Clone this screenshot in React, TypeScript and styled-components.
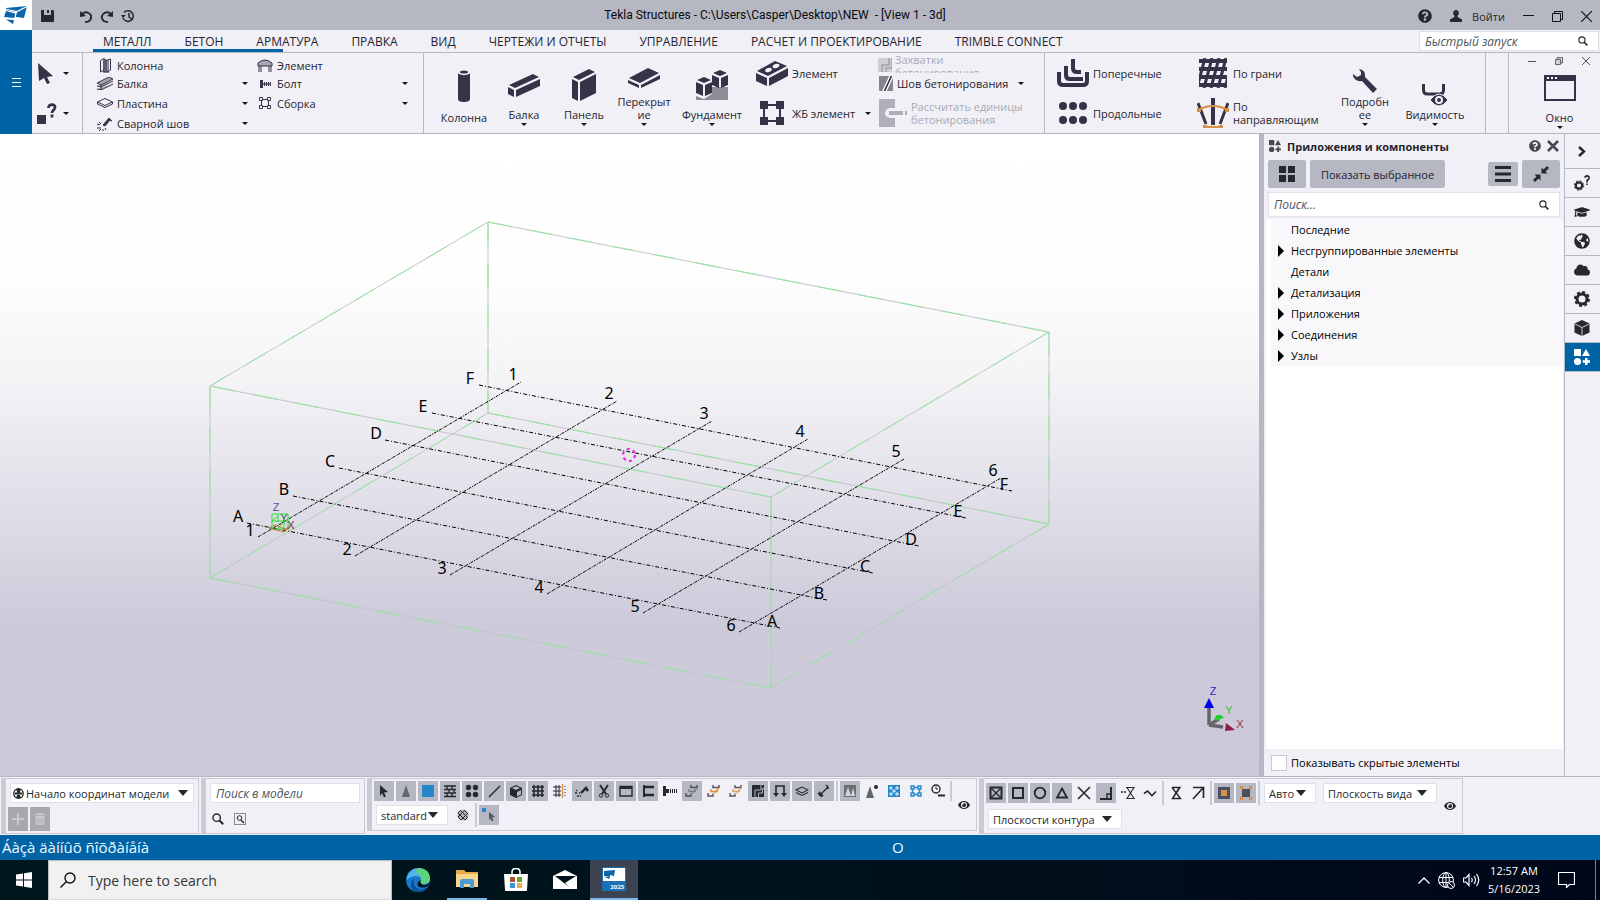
import React from "react";
import styled, { createGlobalStyle, css } from "styled-components";
import {
  FaCloud,
  FaEye,
  FaGlobeAmericas,
  FaGraduationCap,
  FaQuestionCircle,
  FaTrashAlt,
} from "react-icons/fa";

const INK = "#353347";
const DARK = "#25282c";
const PANEL = "#f1f0f6";
const BAR = "#b5b7c3";
const LINE = "#b5b7c3";
const SOFT = "#c9cad4";
const BLUE = "#0063a6";
const ORANGE = "#d68f45";

const GlobalStyle = createGlobalStyle`
  * { box-sizing: border-box; }
  body {
    margin: 0;
    font-family: "Open Sans", "Noto Sans", sans-serif;
    font-size: 11px;
    color: #25242f;
    background: ${PANEL};
  }
  button, input, select {
    font: inherit;
    color: inherit;
    margin: 0;
    padding: 0;
    border: 0;
    background: none;
    border-radius: 0;
  }
  svg { display: block; flex: none; }
  ul { list-style: none; margin: 0; padding: 0; }
`;

/* ---------- frame ---------- */

const Page = styled.div`
  display: flex;
  flex-direction: column;
  min-height: 100vh;
`;

const TitleBar = styled.header`
  display: grid;
  grid-template-columns: 1fr auto 1fr;
  align-items: center;
  height: 30px;
  background: ${BAR};
`;

const TitleSide = styled.div<{ $end?: boolean }>`
  display: flex;
  align-items: center;
  height: 30px;
  gap: ${(p) => (p.$end ? 18 : 8)}px;
  > button { padding-top: 2px; }
  ${(p) => p.$end && css`
    justify-content: flex-end;
    padding-right: 8px;
  `}
`;

const Logo = styled.span`
  width: 32px;
  height: 30px;
  padding: 5px 4px;
  background: #fff;
`;

const TitleText = styled.h1`
  margin: 0 0 0 -50px;
  font: 400 12px/30px Roboto, "Open Sans", sans-serif;
  color: #08080c;
  white-space: pre;
`;

const IconButton = styled.button`
  display: inline-flex;
  align-items: center;
  gap: 10px;
  color: ${DARK};
`;

const SaveButton = styled(IconButton)`
  margin: 0 18px 0 1px;
`;

const HeaderBody = styled.div`
  display: flex;
`;

const MenuButton = styled.button`
  display: grid;
  place-items: center;
  width: 32px;
  background: ${BLUE};
  color: #fff;
`;

const HeaderMain = styled.div`
  flex: 1;
  min-width: 0;
`;

const TabRow = styled.nav`
  position: relative;
  display: flex;
  align-items: center;
  gap: 33px;
  height: 23px;
  padding: 0 1px 0 71px;
  border-bottom: 1px solid ${LINE};
`;

const Tab = styled.button`
  padding-top: 2px;
  font-size: 12px;
  line-height: 20px;
  white-space: nowrap;
`;

const TabMarker = styled.span`
  position: absolute;
  left: 61px;
  bottom: 0;
  width: 190px;
  height: 3px;
  background: ${BLUE};
`;

const SearchBox = styled.label<{ $width?: number }>`
  display: flex;
  align-items: center;
  width: ${(p) => (p.$width ? `${p.$width}px` : "auto")};
  height: 20px;
  padding: 0 10px 0 5px;
  background: #fff;
  border: 1px solid #e0e0e8;

  input {
    flex: 1;
    min-width: 0;
    height: 16px;
    font-size: 12px;
    outline: 0;
  }
  input::placeholder {
    color: #4d5560;
    font-style: italic;
    opacity: 1;
  }
`;

const QuickLaunch = styled(SearchBox)`
  margin-left: auto;
`;

/* ---------- ribbon ---------- */

const Ribbon = styled.div`
  display: flex;
  height: 81px;
  border-bottom: 1px solid ${LINE};
`;

const Group = styled.section<{ $width?: number; $start?: number }>`
  display: flex;
  width: ${(p) => (p.$width ? `${p.$width}px` : "auto")};
  padding-left: ${(p) => p.$start ?? 0}px;
  border-right: 1px solid ${LINE};
`;

const RibbonGap = styled.div`
  flex: 1;
  border-right: 1px solid ${LINE};
`;

const PickColumn = styled.div`
  display: grid;
  grid-template-rows: 40px 40px;
`;

const PickButton = styled.button`
  display: flex;
  align-items: center;
  gap: 4px;

  > span { width: 22px; }
`;

const SmallGrid = styled.div`
  display: grid;
  grid-template-columns: 160px 160px;
  grid-template-rows: 18px 19px 20px 20px;
  grid-auto-flow: column;
  padding: 3px 0 0 14px;
`;

const SmallButton = styled.button`
  display: flex;
  align-items: center;
  gap: 4px;
  padding-right: 9px;
  text-align: left;
  white-space: nowrap;
`;

const SmallIcon = styled.span`
  display: grid;
  place-items: center;
  width: 16px;
`;

const PushCaret = styled.span`
  margin-left: auto;
`;

const BigButton = styled.button<{ $width?: number }>`
  display: flex;
  flex-direction: column;
  align-items: center;
  justify-content: flex-end;
  width: ${(p) => p.$width ?? 60}px;
  padding-bottom: 7px;
  line-height: 13px;
`;

const BigIcon = styled.span<{ $low?: boolean }>`
  display: grid;
  flex: 1;
  align-items: ${(p) => (p.$low ? "end" : "center")};
  padding: ${(p) => (p.$low ? "0 0 2px" : "8px 0 0")};
`;

const BigLabel = styled.span`
  margin-bottom: 2px;
  text-align: center;
  white-space: pre;
`;

const MidColumn = styled.div<{ $width: number; $start?: number }>`
  display: flex;
  flex-direction: column;
  width: ${(p) => p.$width}px;
  padding-left: ${(p) => p.$start ?? 0}px;
`;

const MidButton = styled.button<{ $height?: number; $slot?: number }>`
  display: flex;
  align-items: center;
  gap: 2px;
  height: ${(p) => p.$height ?? 40}px;
  line-height: 13px;
  text-align: left;
  white-space: nowrap;
  overflow: hidden;

  &:disabled { color: #a9aab3; }

  > span:first-child {
    display: grid;
    place-items: center;
    flex: none;
    width: ${(p) => p.$slot ?? 36}px;
  }
  > svg { margin-left: 8px; }
`;

const ClippedButton = styled(MidButton)`
  align-items: flex-start;
  > span:first-child { padding-top: 5px; }
`;

const WindowGroup = styled.div`
  display: flex;
  flex-direction: column;
  width: 91px;
`;

const WindowControls = styled.div`
  display: flex;
  justify-content: space-between;
  padding: 4px 10px 0 19px;
`;

const WindowButton = styled.button`
  display: flex;
  flex: 1;
  flex-direction: column;
  align-items: center;
  justify-content: flex-end;
  padding: 0 0 4px 10px;
  line-height: 13px;

  > svg:first-child { margin-bottom: 10px; }
`;

/* ---------- work area ---------- */

const Work = styled.main`
  display: flex;
  flex: 1;
  min-height: 0;
`;

const Viewport = styled.div`
  flex: 1;
  min-width: 0;
  background: linear-gradient(#fff 0%, #fefefe 22%, #f4f3f6 38%, #dedce6 60%, #cdcada 76%, #cbc8d9 100%);

  svg { width: 100%; height: 100%; }
`;

const GridText = styled.text`
  font: 16px "Noto Sans", "Open Sans", sans-serif;
  text-anchor: middle;
`;

const AxisText = styled.text`
  font: 11px "Liberation Sans", sans-serif;
  text-anchor: middle;
`;

const SidePanel = styled.aside`
  display: flex;
  flex-direction: column;
  width: 306px;
  border-left: 5px solid ${BAR};
  border-right: 1px solid ${LINE};
`;

const PanelTitle = styled.div`
  display: flex;
  align-items: center;
  gap: 6px;
  height: 24px;
  padding: 0 5px 0 5px;

  h2 {
    flex: 1;
    margin: 0;
    font-size: 11px;
    font-weight: 700;
  }
`;

const PanelTools = styled.div`
  display: flex;
  align-items: center;
  gap: 4px;
  padding: 2px 4px 0;
`;

const PanelButton = styled.button<{ $width: number; $height?: number; $push?: boolean }>`
  display: grid;
  place-items: center;
  width: ${(p) => p.$width}px;
  height: ${(p) => p.$height ?? 28}px;
  margin-left: ${(p) => (p.$push ? "auto" : "0")};
  border-radius: 2px;
  background: ${BAR};
`;

const PanelSearch = styled(SearchBox)`
  height: 25px;
  margin: 4px 4px 2px;
`;

const Tree = styled.ul`
  flex: 1;
  margin: 0 1px 0 2px;
  background: #fff;
`;

const TreeItem = styled.li`
  height: 21px;
  margin-left: 5px;
  background: #f8f8fb;
  color: #000;
`;

const TreeButton = styled.button`
  display: flex;
  align-items: center;
  width: 100%;
  height: 21px;
  padding-left: 7px;

  span { width: 13px; }
`;

const HiddenRow = styled.label`
  display: flex;
  align-items: center;
  gap: 4px;
  height: 27px;
  padding-left: 7px;
  color: #000;
`;

const Checkbox = styled.input`
  appearance: none;
  width: 16px;
  height: 16px;
  background: #fff;
  border: 1px solid ${SOFT};
`;

const Rail = styled.nav`
  display: flex;
  flex-direction: column;
  width: 35px;
`;

const RailButton = styled.button<{ $active?: boolean; $tall?: boolean }>`
  display: grid;
  place-items: center;
  height: ${(p) => (p.$tall ? 35 : 29)}px;
  padding-right: 1px;
  border-bottom: 1px solid ${LINE};
  color: ${(p) => (p.$active ? "#fff" : DARK)};
  background: ${(p) => (p.$active ? BLUE : "none")};
`;

/* ---------- bottom toolbars ---------- */

const Dock = styled.div`
  display: flex;
  align-items: flex-start;
  gap: 2px;
  height: 59px;
  padding: 1px;
  border-top: 1px solid ${LINE};
`;

const DockPanel = styled.section<{ $width: number; $short?: boolean }>`
  display: flex;
  align-items: center;
  width: ${(p) => p.$width}px;
  height: ${(p) => (p.$short ? 53 : 56)}px;
  border: 1px solid ${SOFT};
  border-left-width: 5px;
  padding-right: 6px;
`;

const DockRows = styled.div<{ $gap?: number; $top?: number }>`
  display: flex;
  flex: 1;
  flex-direction: column;
  align-self: flex-start;
  gap: ${(p) => p.$gap ?? 4}px;
  padding: ${(p) => p.$top ?? 4}px 0 0 4px;
`;

const DockRow = styled.div<{ $gap?: number; $start?: number }>`
  display: flex;
  align-items: center;
  gap: ${(p) => p.$gap ?? 2}px;
  padding-left: ${(p) => p.$start ?? 0}px;
`;

const ToolStrip = styled(DockRow)`
  margin-left: -2px;
`;

const ToolButton = styled.button<{ $on?: boolean }>`
  display: grid;
  place-items: center;
  width: 20px;
  height: 20px;
  background: ${(p) => (p.$on ? BAR : "none")};
`;

const GreyButton = styled.button`
  display: grid;
  place-items: center;
  width: 20px;
  height: 24px;
  color: #c9c8cf;
  background: #a9a7ad;
`;

const Separator = styled.span<{ $height?: number }>`
  width: 2px;
  height: ${(p) => p.$height ?? 24}px;
  background: ${SOFT};
`;

const SelectBox = styled.label<{ $width: number; $icon?: boolean }>`
  position: relative;
  display: flex;
  align-items: center;
  width: ${(p) => p.$width}px;
  height: 20px;
  background: #fff;
  border: 1px solid #e0e0e8;

  select {
    appearance: none;
    width: 100%;
    height: 18px;
    padding-left: ${(p) => (p.$icon ? 15 : 4)}px;
    outline: 0;
    color: ${DARK};
  }
  > svg:last-child {
    position: absolute;
    right: ${(p) => (p.$icon ? 5 : 9)}px;
    pointer-events: none;
  }
  > svg:first-child {
    position: absolute;
    left: 2px;
    pointer-events: none;
  }
`;

const StatusBar = styled.footer`
  display: grid;
  grid-template-columns: 890px auto;
  align-items: center;
  height: 25px;
  padding-left: 2px;
  font-size: 15px;
  line-height: 25px;
  color: #eefaff;
  background: ${BLUE};
`;

const Taskbar = styled.footer`
  display: flex;
  gap: 1px;
  height: 40px;
  background: linear-gradient(90deg, #00161d, #00121b 50%, #00071a);
  color: #fff;
`;

const TaskButton = styled.button<{ $state?: "open" | "active" }>`
  display: grid;
  place-items: center;
  width: 48px;
  height: 40px;
  border-bottom: ${(p) => (p.$state ? "2px solid #76b9ed" : "0")};
  background: ${(p) => (p.$state === "active" ? "#3d4350" : "none")};
`;

const OpenButton = styled(TaskButton)`
  width: 40px;
  margin: 0 4px;
`;

const TaskSearch = styled.label`
  display: flex;
  align-items: center;
  gap: 12px;
  width: 344px;
  margin: 0 1px 0 -1px;
  padding-left: 11px;
  background: #f1f1f1;
  border: 1px solid #b9bcc0;
  border-bottom-color: #d8dadc;
  color: #1d2226;

  input { flex: 1; min-width: 0; font-size: 14px; outline: 0; }
  input::placeholder { color: #33383c; opacity: 1; }
`;

const Tray = styled.div`
  display: flex;
  align-items: center;
  gap: 8px;
  margin-left: auto;
  padding-right: 4px;
`;

const Clock = styled.time`
  width: 52px;
  margin-right: 10px;
  font-size: 11px;
  line-height: 18px;
  text-align: center;
  white-space: nowrap;
`;

const TrayEdge = styled.span`
  width: 1px;
  height: 40px;
  margin-left: 12px;
  background: #7d828c;
`;

/* ---------- drawings ---------- */

type ArtProps = { w: number; h: number; children: React.ReactNode; vb?: string };
const Art = ({ w, h, vb, children }: ArtProps) => (
  <svg width={w} height={h} viewBox={vb ?? `0 0 ${w} ${h}`} fill={INK} aria-hidden="true">
    {children}
  </svg>
);

const Caret = () => <Art w={6} h={3}><path d="M0 0h6L3 3z" fill="#14141c" /></Art>;
const Arrow = () => <Art w={10} h={6}><path d="M0 0h10L5 6z" fill={DARK} /></Art>;
const Lens = ({ s = 12, c = DARK }: { s?: number; c?: string }) => (
  <Art w={s} h={s} vb="0 0 12 12">
    <circle cx="4.7" cy="4.7" r="3.7" fill="none" stroke={c} strokeWidth="1.4" />
    <path d="M7.5 7.5l3.7 3.7" stroke={c} strokeWidth="2" />
  </Art>
);

const TeklaMark = ({ w = 24, h = 19 }: { w?: number; h?: number }) => (
  <Art w={w} h={h} vb="0 0 24 19">
    <path d="M2 3L23 1L20 13L12 12V7L3 5.500z" fill="#0a66a8" />
    <path d="M0 12L2 6L11 8.500L10.500 13z" fill="#0a66a8" />
    <path d="M3 4.500L13 6.500L23 1.500" stroke="#fff" strokeWidth="1.200" fill="none" />
    <path d="M12.500 7L11 13" stroke="#fff" />
    <path d="M2 14.500L10 15L9 19z" fill="#0a66a8" />
  </Art>
);

const TileMark = ({ s = 16, c = "currentColor" }: { s?: number; c?: string }) => (
  <svg width={s} height={s} viewBox="0 0 16 16" fill={c}>
    <path d="M0 0h7v7H0zM12 0l4 7H8zM11 9h2.500v2.200H16v2.500h-2.500V16H11v-2.300H8.700v-2.500H11z" />
    <circle cx="3.500" cy="12.500" r="3.500" />
  </svg>
);

const art = {
  save: <Art w={13} h={12}><path d="M0 0h3v5h7V0h2l1 1v11H0z M6 0h2v3H6z" fill={DARK} /></Art>,
  undo: <Art w={12} h={13}><path d="M2 4Q5 1 8.500 3T11 8Q10.500 12 5 12" fill="none" stroke={DARK} strokeWidth="2" /><path d="M0 1l6 5-6 1z" fill={DARK} /></Art>,
  redo: <Art w={13} h={13}><path d="M11 4Q8 1 4.500 3T2 8Q2.500 12 8 12" fill="none" stroke={DARK} strokeWidth="2" /><path d="M13 1l-6 5 6 1z" fill={DARK} /></Art>,
  clock: <Art w={14} h={13}><path d="M2 8a5.300 5.300 0 1 0 1-5.500M8 3v4l2.500 2" fill="none" stroke={DARK} strokeWidth="1.500" /><path d="M0 5h5L2 8z" fill={DARK} /></Art>,
  user: <Art w={12} h={12}><path d="M6 0a3 3 0 0 1 1.600 5.500V7L12 9.500V12H0V9.500L4.400 7V5.500A3 3 0 0 1 6 0z" fill={DARK} /></Art>,
  min: <Art w={11} h={11}><path d="M0 4.500h11" stroke="#111" /></Art>,
  max: <Art w={11} h={11}><path d="M.5 2.500h8v8h-8zM2.500 2V.5h8v8H9" stroke="#111" fill="none" /></Art>,
  close: <Art w={11} h={11}><path d="M0 0l11 11M11 0L0 11" stroke="#111" strokeWidth="1.200" /></Art>,
  smin: <Art w={8} h={8}><path d="M0 4.500h8" stroke="#555" /></Art>,
  smax: <Art w={8} h={8}><path d="M.5 2.500h5v5h-5zM2 2V.5h5.500V6H6" stroke="#666" fill="#cfd0d8" /></Art>,
  sclose: <Art w={8} h={8}><path d="M0 0l8 8M8 0L0 8" stroke="#555" /></Art>,
  burger: <Art w={9} h={9}><path d="M0 .5h9M0 4.500h9M0 8.500h9" stroke="#fff" /></Art>,
  cursor: <Art w={16} h={21}><path d="M1 0L16 13L10 14L13 20L10 21L7 15L2 18z" /></Art>,
  inquire: <Art w={20} h={21}><path d="M0 12h9v9H0z" /><path d="M11.500 5C11.500 0 18.500 1 18 4.500C17.800 7 15 7 15 10M15 11.500v3" fill="none" stroke={INK} strokeWidth="2.800" /></Art>,

  sColumn: <Art w={11} h={15}><path d="M3 2h6v13H3z" fill="#8b8b97" /><path d="M.5 2.500L4 .5V12L.5 14zM4 1l2 1v12l-3-1M6 2.500L10.500 1v11L7 14" fill="none" stroke={INK} /></Art>,
  sBeam: <Art w={16} h={13}><path d="M0 6L12 0L16 2L4 8zM0 9l4 1L16 4M0 12l4 1L16 7" fill="#a6a6b2" stroke={INK} /><path d="M4 8v5" stroke={INK} /></Art>,
  sPlate: <Art w={16} h={10}><path d="M.5 4L8 .5L15.500 4L8 7.500zM.5 4v2L8 9.500L15.500 6V4" fill="none" stroke={INK} /></Art>,
  sWeld: <Art w={16} h={15}><path d="M6 9L12 2l3 3-2-1-5 6z" stroke={INK} /><path d="M0 8l3 1M0 12h4M2 15l2-2M6 15v-2M9 14l-1-2M2 6l2 2" stroke={INK} fill="none" /></Art>,
  sElement: <Art w={16} h={13}><path d="M1 4Q8-2 15 4v3H1z" fill="#a6a6b2" stroke={INK} /><path d="M2 7v6M4 7v6M12 7v6M14 7v6" stroke={INK} /></Art>,
  sBolt: <Art w={11} h={8}><path d="M0 0h3v8H0zM4 2h1v4H4zM6 2h1v4H6zM8 2h1v4H8zM10 2h1v4h-1z" /><path d="M3 3h8v2H3z" opacity=".6" /></Art>,
  sAssembly: <Art w={12} h={12}><path d="M.5.5h3v3h-3zM8.500.5h3v3h-3zM.5 8.500h3v3h-3zM8.500 8.500h3v3h-3zM4 2.500h4M4 9.500h4M2.500 4v4M9.500 4v4" fill="none" stroke={INK} /></Art>,

  column: <Art w={12} h={32}><ellipse cx="6" cy="2" rx="4" ry="1.600" /><path d="M0 3.500Q6 7 12 3.500V29Q12 32 6 32Q0 32 0 29z" /></Art>,
  beam: <Art w={32} h={24}><path d="M1 12L25 1L31 4L7 15zM0 14l6 3v7l-6-3zM8 17L32 6v7L8 24z" /></Art>,
  panel: <Art w={24} h={32}><path d="M1 8L17 0L23 3L7 11zM0 10l6 3v19l-6-3zM8 13L24 5v19L8 32z" /></Art>,
  slab: <Art w={32} h={20}><path d="M1 10L20 0L31 5L12 15zM0 12l11 5v3L0 15zM13 17L32 7v4L13 20z" /></Art>,
  footing: (
    <Art w={32} h={30}>
      <path d="M0 26l8 3 8-5V17h16v13H0z" fill="#8d8d98" />
      <path d="M1 10L8 7L15 10L8 13zM0 12l7 3v11l-7-3zM9 15L16 12v11L9 26zM17 3L24 0L31 3L24 6zM16 5l7 3v10l-7-3zM25 8L32 5v10L25 18z" />
    </Art>
  ),
  hollow: (
    <Art w={32} h={25}>
      <path d="M1 10L19 0L31 5L12 15zM0 12l11 5v8L0 20zM13 17L32 7v8L13 25z" />
      <ellipse cx="12.500" cy="9" rx="3.500" ry="2" fill={PANEL} transform="rotate(-20 12.500 9)" />
      <ellipse cx="20" cy="5" rx="3.500" ry="2" fill={PANEL} transform="rotate(-20 20 5)" />
    </Art>
  ),
  frame: <Art w={24} h={24}><path d="M0 0h8v8H0zM16 0h8v8h-8zM0 16h8v8H0zM16 16h8v8h-8z" /><path d="M8 4h8M8 20h8M4 8v8M20 8v8" stroke={INK} strokeWidth="2" /></Art>,
  pour: <Art w={14} h={14}><path d="M0 0h14v14H0z" fill="#cfcfd6" /><path d="M11 0v7H4v7M14 0v10H8v4" fill="none" stroke="#a2a3ad" strokeWidth="1.500" /></Art>,
  joint: <Art w={14} h={15}><path d="M0 0h14v15H0z" fill="#85858f" /><path d="M4 15L11 0M7 15L14 0" stroke="#fff" strokeWidth="1.500" /><path d="M5.500 15L12.500 0" stroke={INK} strokeWidth="1.500" /></Art>,
  calc: <Art w={28} h={28}><path d="M0 0h16v9h-5a5 5 0 0 0 0 10h5v9H0z" fill="#aeafb8" /><path d="M10 12h14v4H10zM26 12h2v4h-2z" fill="#aeafb8" /></Art>,
  stirrup: <Art w={32} h={28}><path d="M16 0v9q0 4 4 4h4M9 7v9q0 4 4 4h13M2 13v9q0 4 4 4h20q4 0 4-4v-9" fill="none" stroke={INK} strokeWidth="4" /></Art>,
  dots: <Art w={28} h={22}>{[4, 14, 24].map((x) => [4, 18].map((y) => <circle key={`${x}${y}`} cx={x} cy={y} r="4" />))}</Art>,
  mesh: <Art w={28} h={30}><path d="M0 3h28M0 11h28M0 19h28M0 27h28" stroke={INK} strokeWidth="4" /><path d="M6 0L-2 30M13 0L5 30M20 0L12 30M27 0L19 30M34 0L26 30" stroke={INK} strokeWidth="3" /></Art>,
  guide: (
    <Art w={32} h={30}>
      <path d="M16 0v27" stroke={INK} strokeWidth="4" />
      <path d="M1 5l8 21M31 5l-8 21" stroke={INK} strokeWidth="3" />
      <path d="M1 12Q16 4 31 12M6 29h20" stroke={ORANGE} strokeWidth="2" fill="none" />
      <path d="M0 10h4v4H0zM28 10h4v4h-4zM6 27h4v4H6zM22 27h4v4h-4z" fill={ORANGE} />
    </Art>
  ),
  wrench: <Art w={24} h={24}><path d="M6 0q6 1 6 6v2l12 12-4 4L9 12Q2 13 0 7V5l4 3 4-2V3z" /></Art>,
  visibility: (
    <Art w={26} h={22}>
      <path d="M1.500 0v6q0 4 4 4h12q4 0 4-4V0" fill="none" stroke={INK} strokeWidth="3" />
      <path d="M8 16q9-12 18 0q-9 12-18 0z" stroke={PANEL} />
      <circle cx="17" cy="16" r="4" fill={PANEL} /><circle cx="17" cy="16" r="2" />
    </Art>
  ),
  window: <Art w={32} h={26}><path d="M1 1h30v24H1z" fill="none" stroke={INK} strokeWidth="2" /><path d="M0 0h32v6H0z" /><path d="M3 3h2M7 3h2M11 3h2" stroke="#fff" strokeWidth="2" /></Art>,
  tiles: <Art w={16} h={16}><path d="M0 0h7v7H0zM9 0h7v7H9zM0 9h7v7H0zM9 9h7v7H9z" fill={DARK} /></Art>,
  list: <Art w={16} h={16}><path d="M0 1.500h16M0 8h16M0 14.500h16" stroke={DARK} strokeWidth="3" /></Art>,
  collapse: <Art w={16} h={16}><path d="M8.500 7.500V1.500l2 2 3.500-3.500 2 2-3.500 3.500 2 2zM7.500 8.500v6l-2-2L2 16l-2-2 3.500-3.500-2-2z" fill={DARK} /></Art>,
  cross: <Art w={12} h={12}><path d="M1 1l10 10M11 1L1 11" stroke="#444850" strokeWidth="2.600" /></Art>,
  chevron: <Art w={8} h={11}><path d="M1 1l5 4.500L1 10" fill="none" stroke={DARK} strokeWidth="2.400" /></Art>,
  gear: (
    <Art w={16} h={16}>
      <circle cx="8" cy="8" r="5" fill="none" stroke={DARK} strokeWidth="3" />
      <circle cx="8" cy="8" r="7" fill="none" stroke={DARK} strokeWidth="2" strokeDasharray="3 2.498" />
    </Art>
  ),
  cube: (
    <Art w={16} h={16}>
      <path d="M8 0l7.500 3.500v9L8 16L.5 12.500v-9z" fill={DARK} />
      <path d="M1 4l7 3.500L15 4M8 7.500V16" fill="none" stroke={PANEL} strokeWidth=".8" />
    </Art>
  ),
  help: (
    <Art w={16} h={16}>
      <circle cx="5" cy="10.500" r="3.200" fill="none" stroke={DARK} strokeWidth="2.200" />
      <circle cx="5" cy="10.500" r="4.700" fill="none" stroke={DARK} strokeDasharray="2 1.690" />
      <path d="M10.500 2.500Q13-.5 15 2Q15.500 4 13 5.500v2M13 8.500v1.500" fill="none" stroke={DARK} strokeWidth="1.600" />
    </Art>
  ),
  node: <Art w={6} h={12}><path d="M0 0l6 6-6 6z" fill="#000" /></Art>,
  origin: <Art w={11} h={11}><circle cx="5.500" cy="5.500" r="4.700" fill="none" stroke={DARK} strokeWidth="1.400" /><path d="M2 4.500h7v2H2zM3 1h5L6.500 5h-2zM3 10h5L6.500 6h-2z" fill={DARK} /></Art>,
  plus: <Art w={12} h={12}><path d="M6 0v12M0 6h12" stroke="#c9c8cf" strokeWidth="2" /></Art>,
  areaLens: <Art w={12} h={12}><path d="M.5.5h11v11H.5z" fill="none" stroke={DARK} strokeDasharray="1 1" /><circle cx="5.500" cy="5" r="2.300" fill="none" stroke={DARK} /><path d="M7 7l3 3" stroke={DARK} strokeWidth="1.500" /></Art>,
  hatch: <Art w={12} h={12}><circle cx="6" cy="6" r="5.600" fill="#b4b5ba" /><path d="M1 4l7 7M3 1l8 8M1 8l3 3M7 1l4 4M4 11l7-7M1 8l7-7M1 4l3-3M8 11l3-3" stroke={DARK} strokeWidth="1" /></Art>,
};

const G = ({ children }: { children: React.ReactNode }) => (
  <svg width="14" height="14" viewBox="0 0 14 14" fill={DARK} stroke="none" aria-hidden="true">{children}</svg>
);
const L = ({ d, w = 1.4, c = DARK }: { d: string; w?: number; c?: string }) => (
  <path d={d} fill="none" stroke={c} strokeWidth={w} />
);
const P = ({ d, c = DARK }: { d: string; c?: string }) => <path d={d} fill={c} />;
const steps = (a: string, b: string) => (
  <>
    <L d="M6 1v2.500h6V1" c={a} />
    <L d="M4 5v2.500h6V5" c={b} />
    <L d="M1 9v3h5V9.500" c={a} />
    <L d="M12 3.500l-2 4M9 7.500L6 11" c={b} w={1} />
  </>
);

type Tool = { name: string; on?: boolean; icon: React.ReactNode };
const sep: Tool = { name: "", icon: null };

const selectionTools: Tool[] = [
  { name: "Выбор всех", on: true, icon: <P d="M3 1l8 7-4 .5 2 4-2 .8-2-4L3 12z" /> },
  { name: "Соединения", on: true, icon: <P d="M7 1l4 12H3z" c="#5e6b69" /> },
  { name: "Детали", on: true, icon: <P d="M1 1h12v12H1z" c="#2487cc" /> },
  { name: "Арматура", on: true, icon: <L d="M1 2h12M1 5.500h12M1 9h12M1 12.500h12M4 2v3M9 2v3M6 6v3M11 6v3M4 9v3M9 9v3" /> },
  { name: "Болты", on: true, icon: <><circle cx="3.500" cy="3.500" r="2.700" /><circle cx="10.500" cy="3.500" r="2.700" /><circle cx="3.500" cy="10.500" r="2.700" /><circle cx="10.500" cy="10.500" r="2.700" /></> },
  { name: "Линии", on: true, icon: <L d="M2 13L13 2" /> },
  { name: "Объемы", on: true, icon: <><P d="M7 1l6 3v7l-6 3-6-3V4z" /><P d="M8 8l4-2v4.500L8 12.500zM3 4L7 2.200 11 4 7 6z" c={BAR} /></> },
  { name: "Сетки", on: true, icon: <L d="M3 1v12M7 1v12M11 1v12M1 3h12M1 7h12M1 11h12" w={1.6} /> },
  { name: "Линии сетки", icon: <><L d="M3 1v12M6 1v12M12 2v1M12 5v1M12 8v1M12 11v1M0 3h8M0 7h8M0 11h8" w={1} /><L d="M9.500 0v14" c={ORANGE} /></> },
  { name: "Сварные швы", on: true, icon: <><L d="M6 9l5-5 2 3" w={2.400} /><L d="M0 9h2M2 12h2M1 6l1 1M4 9h1M5 12h1" /></> },
  { name: "Вырезы", on: true, icon: <><L d="M3 1l6 9M11 1L5 10" w={2} /><circle cx="4" cy="11.500" r="1.700" fill="none" stroke={DARK} /><circle cx="10" cy="11.500" r="1.700" fill="none" stroke={DARK} /></> },
  { name: "Виды", on: true, icon: <><L d="M1 2.500h12v9.500H1z" /><P d="M1 2h12v3H1z" /></> },
  { name: "Фитинги", on: true, icon: <><L d="M3 1v12" w={2} /><L d="M4 3h9M4 11h9" w={2.600} /></> },
  { name: "Отдельные болты", icon: <><P d="M0 2h3v10H0zM3 5h3v4H3z" /><L d="M7.500 5v4M9.500 5v4M11.500 5v4M13.500 5v4" w={1} /></> },
  { name: "Ступени", on: true, icon: steps("#4b4d57", "#777983") },
  { name: "Сборки", icon: steps("#55565e", "#e08a2c") },
  { name: "Объекты сборок", icon: steps("#55565e", "#e0a05c") },
  { name: "Захватки", on: true, icon: <><P d="M1 1h12v12H1z" /><L d="M10 1v5H4v7M13 4.500h-1.500V9H7.500v4" c={BAR} w={1} /></> },
  { name: "Поверхности", on: true, icon: <><L d="M3 11V2h8v9" w={1.6} /><P d="M0 9h6l-3 4zM8 9h6l-3 4z" /></> },
  { name: "Слои", on: true, icon: <><L d="M1 6l6-3 6 3-6 3z" w={1.1} /><L d="M1 8.500l6 3 6-3" w={1.1} /></> },
  { name: "Размеры", on: true, icon: <><L d="M3 11l8-8M1 9l4 4M9 1l2 2v2" /><P d="M2 7v5h5z" /></> },
  sep,
  { name: "Компоненты", on: true, icon: <><P d="M1 1h12v12H1z" c="#6a706f" /><P d="M5 3l3 9H2zM10 4l2 8H8z" c="#d3d6d8" /></> },
  { name: "Объекты компонентов", icon: <><P d="M5 2l4 12H1z" c="#5e6b69" /><circle cx="11" cy="3" r="2" fill={DARK} /></> },
  { name: "Выбор сборок", icon: <><P d="M1 1h12v12H1z" c="#2487cc" /><L d="M3 3h2v2H3zM9 3h2v2H9zM3 9h2v2H3zM9 9h2v2H9zM6 6h2v2H6z" c="#e8f4ff" w={1} /></> },
  { name: "Выбор объектов", icon: <L d="M2 2h3v3H2zM9 2h3v3H9zM2 9h3v3H2zM9 9h3v3H9zM5 3.500h4M5 10.500h4M3.500 5v4M10.500 5v4" c="#2487cc" /> },
  { name: "Задачи", icon: <><circle cx="5" cy="5" r="4" fill="none" stroke={DARK} strokeWidth="1.400" /><L d="M5 2.500V5h2" w={1} /><P d="M7 10.500h7v2H7z" /></> },
  sep,
];

const snapTools: Tool[] = [
  { name: "Точки", on: true, icon: <><L d="M1.500 1.500h11v11h-11z" w={2} /><L d="M2 2l10 10M12 2L2 12" /></> },
  { name: "Конечные точки", on: true, icon: <L d="M2 2h10v10H2z" w={2} /> },
  { name: "Центры", on: true, icon: <circle cx="7" cy="7" r="5.300" fill="none" stroke={DARK} strokeWidth="1.800" /> },
  { name: "Середины", on: true, icon: <L d="M7 2.500l5 9H2z" w={1.800} /> },
  { name: "Пересечения", icon: <L d="M1 1l12 12M13 1L1 13" w={1.600} /> },
  { name: "Перпендикуляр", on: true, icon: <><L d="M12 1v12H1" w={2} /><L d="M8 12V8h4" /></> },
  { name: "Продолжения", icon: <><L d="M0 6h2M3 6h2" /><L d="M5 1.500h8L6 12.500h8M6 1.500l7 11" w={1.100} /></> },
  { name: "Любое положение", icon: <L d="M1 7.500L4.500 5 9 9.500 13 5.500" w={1.600} /> },
  sep,
  { name: "Ближайшие", icon: <L d="M3 1.500h8L3.500 12.500h8L3 1.500M10.500 1.500l-7 11" /> },
  { name: "Линии и края", icon: <L d="M2 1.500h10.500V12M12 2L2 13" w={1.700} /> },
  sep,
  { name: "Опорные линии", on: true, icon: <><P d="M1 1h12v12H1z" c="#4b4f5e" /><P d="M4 4h6v6H4z" c={ORANGE} /></> },
  { name: "Геометрия", on: true, icon: <><P d="M3 3h8v8H3z" c="#4b4f5e" /><P d="M1 0h3v3H1zM10 0h3v3h-3zM1 11h3v3H1zM10 11h3v3h-3z" c={ORANGE} /></> },
  sep,
];

const Tools = ({ items, line }: { items: Tool[]; line: number }) => (
  <>
    {items.map((t, i) =>
      t.name ? (
        <ToolButton key={i} $on={t.on} aria-label={t.name}><G>{t.icon}</G></ToolButton>
      ) : (
        <Separator key={i} $height={line} />
      )
    )}
  </>
);

const Dropdown = ({ label, value, width, icon }: { label: string; value: string; width: number; icon?: React.ReactNode }) => (
  <SelectBox $width={width} $icon={!!icon}>
    {icon}
    <select aria-label={label} defaultValue={value}><option>{value}</option></select>
    <Arrow />
  </SelectBox>
);

/* ---------- model view ---------- */

type Seg = [number, number, number, number];
const letterLines: [string, Seg][] = [
  ["A", [247, 523, 780, 628]],
  ["B", [293, 496, 827, 600]],
  ["C", [339, 468, 873, 573]],
  ["D", [385, 440, 919, 546]],
  ["E", [432, 413, 966, 518]],
  ["F", [479, 385, 1012, 491]],
];
const numberLines: [string, Seg][] = [
  ["1", [258, 537, 521, 382]],
  ["2", [355, 556, 617, 401]],
  ["3", [450, 575, 712, 421]],
  ["4", [547, 594, 808, 439]],
  ["5", [643, 613, 904, 459]],
  ["6", [739, 632, 1001, 478]],
];
const boxEdges: Seg[] = [
  [210, 386, 488, 222], [488, 222, 1049, 332], [1049, 332, 771, 497], [771, 497, 210, 386],
  [210, 578, 488, 413], [488, 413, 1049, 524], [1049, 524, 771, 688], [771, 688, 210, 578],
  [210, 386, 210, 578], [488, 222, 488, 413], [1049, 332, 1049, 524], [771, 497, 771, 688],
];

const ModelView = () => (
  <svg viewBox="0 134 1259 642" preserveAspectRatio="xMidYMid meet" role="img" aria-label="View 1 - 3d">
    {boxEdges.map(([a, b, c, d], i) => (
      <g key={i} fill="none">
        <path d={`M${a} ${b}L${c} ${d}`} stroke="#c3c5cc" />
        <path d={`M${a} ${b}L${c} ${d}`} stroke="#94e69a" strokeDasharray="24 18" />
      </g>
    ))}
    {letterLines.map(([t, [a, b, c, d]]) => (
      <g key={t}>
        <path d={`M${a} ${b}L${c} ${d}`} stroke="#000" strokeDasharray="4 2 1 2" />
        <GridText x={a - 9} y={b - 1}>{t}</GridText>
        <GridText x={c - 8} y={d - 1}>{t}</GridText>
      </g>
    ))}
    {numberLines.map(([t, [a, b, c, d]]) => (
      <g key={t}>
        <path d={`M${a} ${b}L${c} ${d}`} stroke="#000" strokeDasharray="3 1 1 1" />
        <GridText x={a - 8} y={b - 1}>{t}</GridText>
        <GridText x={c - 8} y={d - 2}>{t}</GridText>
      </g>
    ))}
    <circle cx="629" cy="455" r="6" fill="none" stroke="#e01fe0" strokeWidth="2" strokeDasharray="3 3.300" />
    <g fill="none">
      <path d="M272 529V514h16v15zM272 521h16M278 514v8M272 521l6-5M284 516v12M276 530l8-8" stroke="#22e032" />
      <path d="M269 528l6-3 10 4 4-2-5 5-8-2z" stroke="#c9762c" />
    </g>
    <AxisText x="276" y="511" fill="#5450a8">Z</AxisText>
    <AxisText x="284" y="522" fill="#4f6b5c">Y</AxisText>
    <AxisText x="291" y="529" fill="#7c2c45">X</AxisText>
    <path d="M1209 725V708M1209 725l10-6M1209 725l14 2" stroke="#65656d" strokeWidth="3.500" fill="none" />
    <path d="M1204 708l5-10 5 10z" fill="#0000ea" />
    <path d="M1214 719l3-4h4l3 3-4 1-2 2z" fill="#1fd02b" />
    <path d="M1226 723l9 7-10 1z" fill="#8c1d45" />
    <AxisText x="1213" y="695" fill="#2b2bd0">Z</AxisText>
    <AxisText x="1229" y="714" fill="#2fc23b">Y</AxisText>
    <AxisText x="1240" y="728" fill="#9c3150">X</AxisText>
  </svg>
);

/* ---------- data ---------- */

const tabs = ["МЕТАЛЛ", "БЕТОН", "АРМАТУРА", "ПРАВКА", "ВИД", "ЧЕРТЕЖИ И ОТЧЕТЫ", "УПРАВЛЕНИЕ", "РАСЧЕТ И ПРОЕКТИРОВАНИЕ", "TRIMBLE CONNECT"];

const steel: [string, React.ReactNode, boolean][] = [
  ["Колонна", art.sColumn, false],
  ["Балка", art.sBeam, true],
  ["Пластина", art.sPlate, true],
  ["Сварной шов", art.sWeld, true],
  ["Элемент", art.sElement, false],
  ["Болт", art.sBolt, true],
  ["Сборка", art.sAssembly, true],
];

const concrete: [string, React.ReactNode, boolean, number][] = [
  ["Колонна", art.column, false, 60],
  ["Балка", art.beam, true, 60],
  ["Панель", art.panel, true, 60],
  ["Перекрыт\nие", art.slab, true, 60],
  ["Фундамент", art.footing, true, 76],
];

const tree: [string, boolean][] = [
  ["Последние", false],
  ["Несгруппированные элементы", true],
  ["Детали", false],
  ["Детализация", true],
  ["Приложения", true],
  ["Соединения", true],
  ["Узлы", true],
];

const rail: [string, React.ReactNode][] = [
  ["Справка", art.help],
  ["Обучение", <FaGraduationCap size={16} />],
  ["Сеть", <FaGlobeAmericas size={16} />],
  ["Облако", <FaCloud size={16} />],
  ["Настройки", art.gear],
  ["Модель", art.cube],
];

type BigProps = { label: string; icon: React.ReactNode; caret?: boolean; width?: number; low?: boolean };
const Big = ({ label, icon, caret, width, low }: BigProps) => (
  <BigButton $width={width}>
    <BigIcon $low={low}>{icon}</BigIcon>
    <BigLabel>{label}</BigLabel>
    {caret && <Caret />}
  </BigButton>
);

export default function App() {
  return (
    <Page>
      <GlobalStyle />
      <TitleBar>
        <TitleSide>
          <Logo><TeklaMark /></Logo>
          <SaveButton aria-label="Сохранить">{art.save}</SaveButton>
          <IconButton aria-label="Отменить">{art.undo}</IconButton>
          <IconButton aria-label="Повторить">{art.redo}</IconButton>
          <IconButton aria-label="Журнал">{art.clock}</IconButton>
        </TitleSide>
        <TitleText>{"Tekla Structures - C:\\Users\\Casper\\Desktop\\NEW  - [View 1 - 3d]"}</TitleText>
        <TitleSide $end>
          <IconButton aria-label="Справка"><FaQuestionCircle size={14} /></IconButton>
          <IconButton>{art.user}Войти</IconButton>
          <IconButton aria-label="Свернуть">{art.min}</IconButton>
          <IconButton aria-label="Развернуть">{art.max}</IconButton>
          <IconButton aria-label="Закрыть">{art.close}</IconButton>
        </TitleSide>
      </TitleBar>

      <HeaderBody>
        <MenuButton aria-label="Меню">{art.burger}</MenuButton>
        <HeaderMain>
          <TabRow>
            {tabs.map((t) => <Tab key={t}>{t}</Tab>)}
            <TabMarker />
            <QuickLaunch $width={180}>
              <input placeholder="Быстрый запуск" aria-label="Быстрый запуск" />
              <Lens s={10} />
            </QuickLaunch>
          </TabRow>

          <Ribbon>
            <Group $width={51} $start={5}>
              <PickColumn>
                <PickButton aria-label="Выбрать"><span>{art.cursor}</span><Caret /></PickButton>
                <PickButton aria-label="Запросить"><span>{art.inquire}</span><Caret /></PickButton>
              </PickColumn>
            </Group>

            <Group $width={341}>
              <SmallGrid>
                {steel.map(([label, icon, caret]) => (
                  <SmallButton key={label}>
                    <SmallIcon>{icon}</SmallIcon>
                    {label}
                    {caret && <PushCaret><Caret /></PushCaret>}
                  </SmallButton>
                ))}
              </SmallGrid>
            </Group>

            <Group $width={621} $start={10}>
              {concrete.map(([label, icon, caret, width]) => (
                <Big key={label} label={label} icon={icon} caret={caret} width={width} />
              ))}
              <MidColumn $width={125} $start={4}>
                <MidButton><span>{art.hollow}</span>Элемент</MidButton>
                <MidButton><span>{art.frame}</span>ЖБ элемент<Caret /></MidButton>
              </MidColumn>
              <MidColumn $width={160} $start={2}>
                <ClippedButton disabled $height={20} $slot={16}><span>{art.pour}</span><span>Захватки<br />бетонирования</span></ClippedButton>
                <MidButton $height={20} $slot={18}><span>{art.joint}</span>Шов бетонирования<Caret /></MidButton>
                <MidButton disabled $slot={32}><span>{art.calc}</span><span>Рассчитать единицы<br />бетонирования</span></MidButton>
              </MidColumn>
            </Group>

            <Group $width={441} $start={10}>
              <MidColumn $width={140}>
                <MidButton><span>{art.stirrup}</span>Поперечные</MidButton>
                <MidButton><span>{art.dots}</span>Продольные</MidButton>
              </MidColumn>
              <MidColumn $width={135}>
                <MidButton><span>{art.mesh}</span>По грани</MidButton>
                <MidButton><span>{art.guide}</span><span>По<br />направляющим</span></MidButton>
              </MidColumn>
              <Big label={"Подробн\nее"} icon={art.wrench} caret width={70} low />
              <Big label="Видимость" icon={art.visibility} caret width={70} low />
            </Group>

            <RibbonGap />

            <WindowGroup>
              <WindowControls>
                <button aria-label="Свернуть вид">{art.smin}</button>
                <button aria-label="Развернуть вид">{art.smax}</button>
                <button aria-label="Закрыть вид">{art.sclose}</button>
              </WindowControls>
              <WindowButton>{art.window}<BigLabel>Окно</BigLabel><Caret /></WindowButton>
            </WindowGroup>
          </Ribbon>
        </HeaderMain>
      </HeaderBody>

      <Work>
        <Viewport><ModelView /></Viewport>
        <SidePanel>
          <PanelTitle>
            <TileMark s={12} c="#444850" />
            <h2>Приложения и компоненты</h2>
            <IconButton aria-label="Справка по панели"><FaQuestionCircle size={12} color="#444850" /></IconButton>
            <IconButton aria-label="Закрыть панель">{art.cross}</IconButton>
          </PanelTitle>
          <PanelTools>
            <PanelButton $width={38} aria-label="Плитка">{art.tiles}</PanelButton>
            <PanelButton $width={135}>Показать выбранное</PanelButton>
            <PanelButton $width={30} $height={24} $push aria-label="Список">{art.list}</PanelButton>
            <PanelButton $width={38} aria-label="Свернуть все">{art.collapse}</PanelButton>
          </PanelTools>
          <PanelSearch>
            <input placeholder="Поиск..." aria-label="Поиск" />
            <Lens s={10} />
          </PanelSearch>
          <Tree>
            {tree.map(([label, open]) => (
              <TreeItem key={label}>
                <TreeButton><span>{open && art.node}</span>{label}</TreeButton>
              </TreeItem>
            ))}
          </Tree>
          <HiddenRow><Checkbox type="checkbox" />Показывать скрытые элементы</HiddenRow>
        </SidePanel>
        <Rail>
          <RailButton $tall aria-label="Скрыть">{art.chevron}</RailButton>
          {rail.map(([label, icon]) => <RailButton key={label} aria-label={label}>{icon}</RailButton>)}
          <RailButton $active aria-label="Приложения и компоненты"><TileMark /></RailButton>
        </Rail>
      </Work>

      <Dock>
        <DockPanel $width={198}>
          <DockRows>
            <Dropdown label="Рабочая плоскость" value="Начало координат модели" width={184} icon={art.origin} />
            <ToolStrip>
              <GreyButton aria-label="Добавить">{art.plus}</GreyButton>
              <GreyButton aria-label="Удалить"><FaTrashAlt size={12} /></GreyButton>
            </ToolStrip>
          </DockRows>
        </DockPanel>
        <DockPanel $width={164}>
          <DockRows $gap={10}>
            <SearchBox $width={150}><input placeholder="Поиск в модели" aria-label="Поиск в модели" /></SearchBox>
            <DockRow $gap={10} $start={2}>
              <IconButton aria-label="Найти"><Lens /></IconButton>
              <IconButton aria-label="Найти в области">{art.areaLens}</IconButton>
            </DockRow>
          </DockRows>
        </DockPanel>
        <DockPanel $width={610} $short>
          <DockRows $gap={2} $top={2}>
            <ToolStrip><Tools items={selectionTools} line={20} /></ToolStrip>
            <DockRow $gap={6}>
              <DockRow $gap={9}>
                <Dropdown label="Фильтр выбора" value="standard" width={72} />
                <IconButton aria-label="Фильтр">{art.hatch}</IconButton>
              </DockRow>
              <DockRow>
                <Separator />
                <ToolButton $on aria-label="Прямое изменение">
                  <G><P d="M0 0h4v4H0z" c="#2487cc" /><P d="M7 4l6 5-3 .5 1.500 3-2 .8-1.300-3L7 12z" c="#55565e" /></G>
                </ToolButton>
              </DockRow>
            </DockRow>
          </DockRows>
          <IconButton aria-label="Видимость панели выбора"><FaEye size={12} /></IconButton>
        </DockPanel>
        <DockPanel $width={484}>
          <DockRows $top={2}>
            <ToolStrip>
              <Tools items={snapTools} line={24} />
              <DockRow $gap={7} $start={2}>
                <Dropdown label="Режим" value="Авто" width={52} />
                <Dropdown label="Плоскость" value="Плоскость вида" width={114} />
              </DockRow>
            </ToolStrip>
            <Dropdown label="Привязка" value="Плоскости контура" width={134} />
          </DockRows>
          <IconButton aria-label="Видимость панели привязки"><FaEye size={12} /></IconButton>
        </DockPanel>
      </Dock>

      <StatusBar><span>Áàçà äàííûõ ñîõðàíåíà</span><span>O</span></StatusBar>

      <Taskbar>
        <TaskButton aria-label="Start">
          <Art w={16} h={16}><path d="M0 2.500l7-1v6H0zM8 1.300L16 0v7.500H8zM0 8.500h7v6l-7-1zM8 8.500h8V16l-8-1.300z" fill="#fff" /></Art>
        </TaskButton>
        <TaskSearch>
          <Art w={16} h={16}><circle cx="10" cy="6" r="5" fill="none" stroke="#111" strokeWidth="1.400" /><path d="M6.500 9.500L.5 15.500" stroke="#111" strokeWidth="1.400" /></Art>
          <input placeholder="Type here to search" aria-label="Type here to search" />
        </TaskSearch>
        <TaskButton aria-label="Microsoft Edge">
          <Art w={24} h={24}>
            <circle cx="12" cy="12" r="12" fill="#1b78c8" />
            <path d="M1 9Q4 0 13 0q10 1 11 10q0 6-7 6q-4-1-2-4q0-4-5-4q-6 0-9 4z" fill="#4fb6ea" />
            <path d="M14 0q9 1 10 10q0 6-7 6q-4-1-2-4q1-6-6-8q2-3 5-4z" fill="#5fd37a" />
            <path d="M8 11q-2 8 6 11q4 0 7-3q-3 5-9 5Q4 23 5 16q0-4 3-5z" fill="#0d4f9a" />
            <path d="M15 12q-2 3 2 5q4 1 7-3l-2 4q-6 3-10 0q-2-4 3-6z" fill="#00131c" />
          </Art>
        </TaskButton>
        <OpenButton $state="open" aria-label="File Explorer">
          <Art w={22} h={20}>
            <path d="M0 1h8l2 2h12v15H0z" fill="#e7a94a" /><path d="M0 5h22v13H0z" fill="#fbd68a" />
            <path d="M4 19v-7q0-2 2-2h10q2 0 2 2v7h-4v-4H8v4z" fill="#4a9bd8" />
          </Art>
        </OpenButton>
        <TaskButton aria-label="Microsoft Store">
          <Art w={24} h={24}>
            <path d="M8 6V4q0-3.500 4-3.500T16 4v2" fill="none" stroke="#fff" strokeWidth="1.500" />
            <path d="M0 6h24l-1 16q0 1-1 1H2q-1 0-1-1z" fill="#fff" />
            <path d="M6 9h5v5H6z" fill="#a8552c" /><path d="M13 9h5v5h-5z" fill="#6aa52c" />
            <path d="M6 15h5v5H6z" fill="#3f95d5" /><path d="M13 15h5v5h-5z" fill="#e8ad5a" />
          </Art>
        </TaskButton>
        <TaskButton aria-label="Mail">
          <Art w={24} h={20}><path d="M0 6L12 0l12 6v13H0z" fill="#fff" /><path d="M2 6h21L12 13l4 4z" fill="#00131c" /></Art>
        </TaskButton>
        <TaskButton $state="active" aria-label="Tekla Structures 2023">
          <svg width="24" height="24" viewBox="0 0 24 24">
            <path d="M0 0h24v24H0z" fill="#1c6fb2" /><path d="M1 1h22v13H1z" fill="#fff" />
            <path d="M2 4l11-1-1 6-4-1v2L2 9zM3 10h5l-1 2z" fill="#0a66a8" />
            <text x="22" y="22" fontSize="6" fontWeight="700" textAnchor="end" fill="#fff" fontFamily="Open Sans, sans-serif">2023</text>
          </svg>
        </TaskButton>
        <Tray>
          <IconButton aria-label="Show hidden icons"><Art w={12} h={7}><path d="M.5 6.500l5.500-5.500 5.500 5.500" fill="none" stroke="#fff" strokeWidth="1.300" /></Art></IconButton>
          <IconButton aria-label="Network">
            <Art w={17} h={17}>
              <g fill="none" stroke="#fff"><circle cx="8" cy="8" r="7.400" /><ellipse cx="8" cy="8" rx="3.300" ry="7.400" /><path d="M1 5.500h14M1 10.500h14M8 .5v15" /></g>
              <circle cx="13" cy="13" r="3.500" fill="#00071a" stroke="#fff" /><path d="M10.800 10.800l4.400 4.400" stroke="#fff" />
            </Art>
          </IconButton>
          <IconButton aria-label="Volume">
            <Art w={17} h={14}><path d="M.5 5h2.500l3-3.500v11L3 9H.5zM8.500 5q1.500 2 0 4M11 3q3 4 0 8M13.500 1q4.500 6 0 12" fill="none" stroke="#fff" strokeWidth="1.200" /></Art>
          </IconButton>
          <Clock>12:57 AM<br />5/16/2023</Clock>
          <IconButton aria-label="Notifications">
            <Art w={17} h={16}><path d="M.5.500h16v12h-5L8.500 15.500V12.500H.5z" fill="none" stroke="#fff" strokeWidth="1.200" /></Art>
          </IconButton>
          <TrayEdge />
        </Tray>
      </Taskbar>
    </Page>
  );
}
